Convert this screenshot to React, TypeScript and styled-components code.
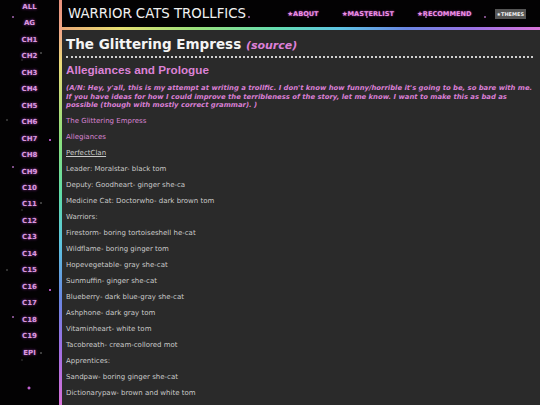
import React from "react";
import styled, { createGlobalStyle } from "styled-components";

const Global = createGlobalStyle`
  html, body { margin: 0; padding: 0; height: 100%; overflow: hidden; background: #000; }
  #root { height: 100%; }
  * { box-sizing: border-box; }
`;

const stars = `
  radial-gradient(1px 1px at 13px 17px, #d080e0 50%, transparent 100%),
  radial-gradient(1px 1px at 41px 53px, #ffffff66 50%, transparent 100%),
  radial-gradient(2px 2px at 29px 88px, #c060d0 40%, transparent 100%),
  radial-gradient(1px 1px at 7px 120px, #ffffff50 50%, transparent 100%),
  radial-gradient(1.5px 1.5px at 50px 140px, #b050c0 50%, transparent 100%),
  radial-gradient(1px 1px at 22px 60px, #ffffff30 50%, transparent 100%)
`;

const Page = styled.div`
  display: flex;
  height: 100%;
  background-color: #030203;
  background-image: ${stars};
  background-size: 59px 150px;
  font-family: "DejaVu Sans", Verdana, sans-serif;
`;

const Sidebar = styled.nav`
  width: 59px;
  flex: none;
  display: flex;
  flex-direction: column;
  align-items: center;
  margin-top: -1px;
`;

const SideLink = styled.a`
  display: block;
  font-size: 7px;
  font-weight: bold;
  line-height: 16.45px;
  color: #dc9ae0;
  text-decoration: none;
  text-shadow: 0 0 3px #a040b0;
`;

const Rail = styled.div`
  width: 3px;
  flex: none;
  background: linear-gradient(
    to bottom,
    #e8907c 0%,
    #f0a888 8%,
    #eadc78 16%,
    #8ee07c 34%,
    #60dca8 48%,
    #5ec6e0 60%,
    #6a86e2 74%,
    #a070e4 86%,
    #d872d8 100%
  );
`;

const Main = styled.div`
  flex: 1;
  display: flex;
  flex-direction: column;
  min-width: 0;
`;

const Header = styled.header`
  height: 27px;
  flex: none;
  display: flex;
  align-items: center;
  padding-left: 6px;
`;

const SiteTitle = styled.h1`
  margin: 0;
  font-size: 13.3px;
  font-weight: normal;
  color: #f2f2f2;
  margin-right: auto;
`;

const NavLink = styled.a`
  font-size: 6.6px;
  font-weight: bold;
  color: #ec8fe6;
  text-decoration: none;
  margin-right: 23px;
  text-shadow: 0 0 2px #a040a0;
`;

const ThemeButton = styled.button`
  border: none;
  background: #555;
  color: #f0f0f0;
  font-family: "DejaVu Sans", Verdana, sans-serif;
  font-size: 5px;
  font-weight: bold;
  padding: 0 2px;
  height: 10px;
  line-height: 10px;
  margin-right: 14px;
  margin-top: 1px;
`;

const HeaderLine = styled.div`
  height: 3px;
  flex: none;
  background: linear-gradient(
    to right,
    #eaa878 0%,
    #e6de70 12%,
    #9ae07c 28%,
    #64dcb0 45%,
    #5ec4e2 58%,
    #6a86e2 72%,
    #9a72e4 86%,
    #d874d8 100%
  );
`;

const Content = styled.main`
  flex: 1;
  background: #2a2a2a;
  padding: 6px 7px 0 4px;
  overflow: hidden;
`;

const StoryTitle = styled.h2`
  margin: 0;
  font-size: 13.5px;
  font-weight: bold;
  color: #f4f4f4;
  padding-bottom: 2px;
  border-bottom: 2px dotted #cfcfcf;
  line-height: 16px;
`;

const Source = styled.a`
  font-size: 11px;
  font-style: italic;
  color: #dd80d8;
  text-decoration: none;
`;

const Chapter = styled.h3`
  margin: 5px 0 0;
  font-family: "Liberation Sans", Arial, sans-serif;
  font-size: 11.7px;
  font-weight: bold;
  color: #dc82d6;
  line-height: 14px;
`;

const Note = styled.p`
  margin: 7px 0 0;
  font-size: 6.85px;
  font-weight: bold;
  font-style: italic;
  color: #d97fd4;
  line-height: 8.7px;
`;

const Line = styled.p<{ tone?: "pink" | "plain" }>`
  margin: 7px 0 0;
  font-size: 7px;
  line-height: 9px;
  color: ${(p) => (p.tone === "pink" ? "#d884d2" : "#c9c9c9")};
`;

const FirstLine = styled(Line)`
  margin-top: 7px;
`;

const Under = styled.span`
  text-decoration: underline;
`;

const sideItems = [
  "ALL", "AG", "CH1", "CH2", "CH3", "CH4", "CH5", "CH6", "CH7", "CH8", "CH9",
  "C10", "C11", "C12", "C13", "C14", "C15", "C16", "C17", "C18", "C19", "EPI",
];

const lines = [
  "Leader: Moralstar- black tom",
  "Deputy: Goodheart- ginger she-ca",
  "Medicine Cat: Doctorwho- dark brown tom",
  "Warriors:",
  "Firestorm- boring tortoiseshell he-cat",
  "Wildflame- boring ginger tom",
  "Hopevegetable- gray she-cat",
  "Sunmuffin- ginger she-cat",
  "Blueberry- dark blue-gray she-cat",
  "Ashphone- dark gray tom",
  "Vitaminheart- white tom",
  "Tacobreath- cream-collored mot",
  "Apprentices:",
  "Sandpaw- boring ginger she-cat",
  "Dictionarypaw- brown and white tom",
];

export default function App() {
  return (
    <>
      <Global />
      <Page>
        <Sidebar>
          {sideItems.map((s) => (
            <SideLink key={s}>{s}</SideLink>
          ))}
        </Sidebar>
        <Rail />
        <Main>
          <Header>
            <SiteTitle>WARRIOR CATS TROLLFICS</SiteTitle>
            <NavLink>★ABOUT</NavLink>
            <NavLink>★MASTERLIST</NavLink>
            <NavLink>★RECOMMEND</NavLink>
            <ThemeButton>★THEMES</ThemeButton>
          </Header>
          <HeaderLine />
          <Content>
            <StoryTitle>
              The Glittering Empress <Source>(source)</Source>
            </StoryTitle>
            <Chapter>Allegiances and Prologue</Chapter>
            <Note>
              (A/N: Hey, y'all, this is my attempt at writing a trollfic. I don't know how
              funny/horrible it's going to be, so bare with me. If you have ideas for how I
              could improve the terribleness of the story, let me know. I want to make this
              as bad as possible (though with mostly correct grammar). )
            </Note>
            <FirstLine tone="pink">The Glittering Empress</FirstLine>
            <Line tone="pink">Allegiances</Line>
            <Line>
              <Under>PerfectClan</Under>
            </Line>
            {lines.map((l) => (
              <Line key={l}>{l}</Line>
            ))}
          </Content>
        </Main>
      </Page>
    </>
  );
}
